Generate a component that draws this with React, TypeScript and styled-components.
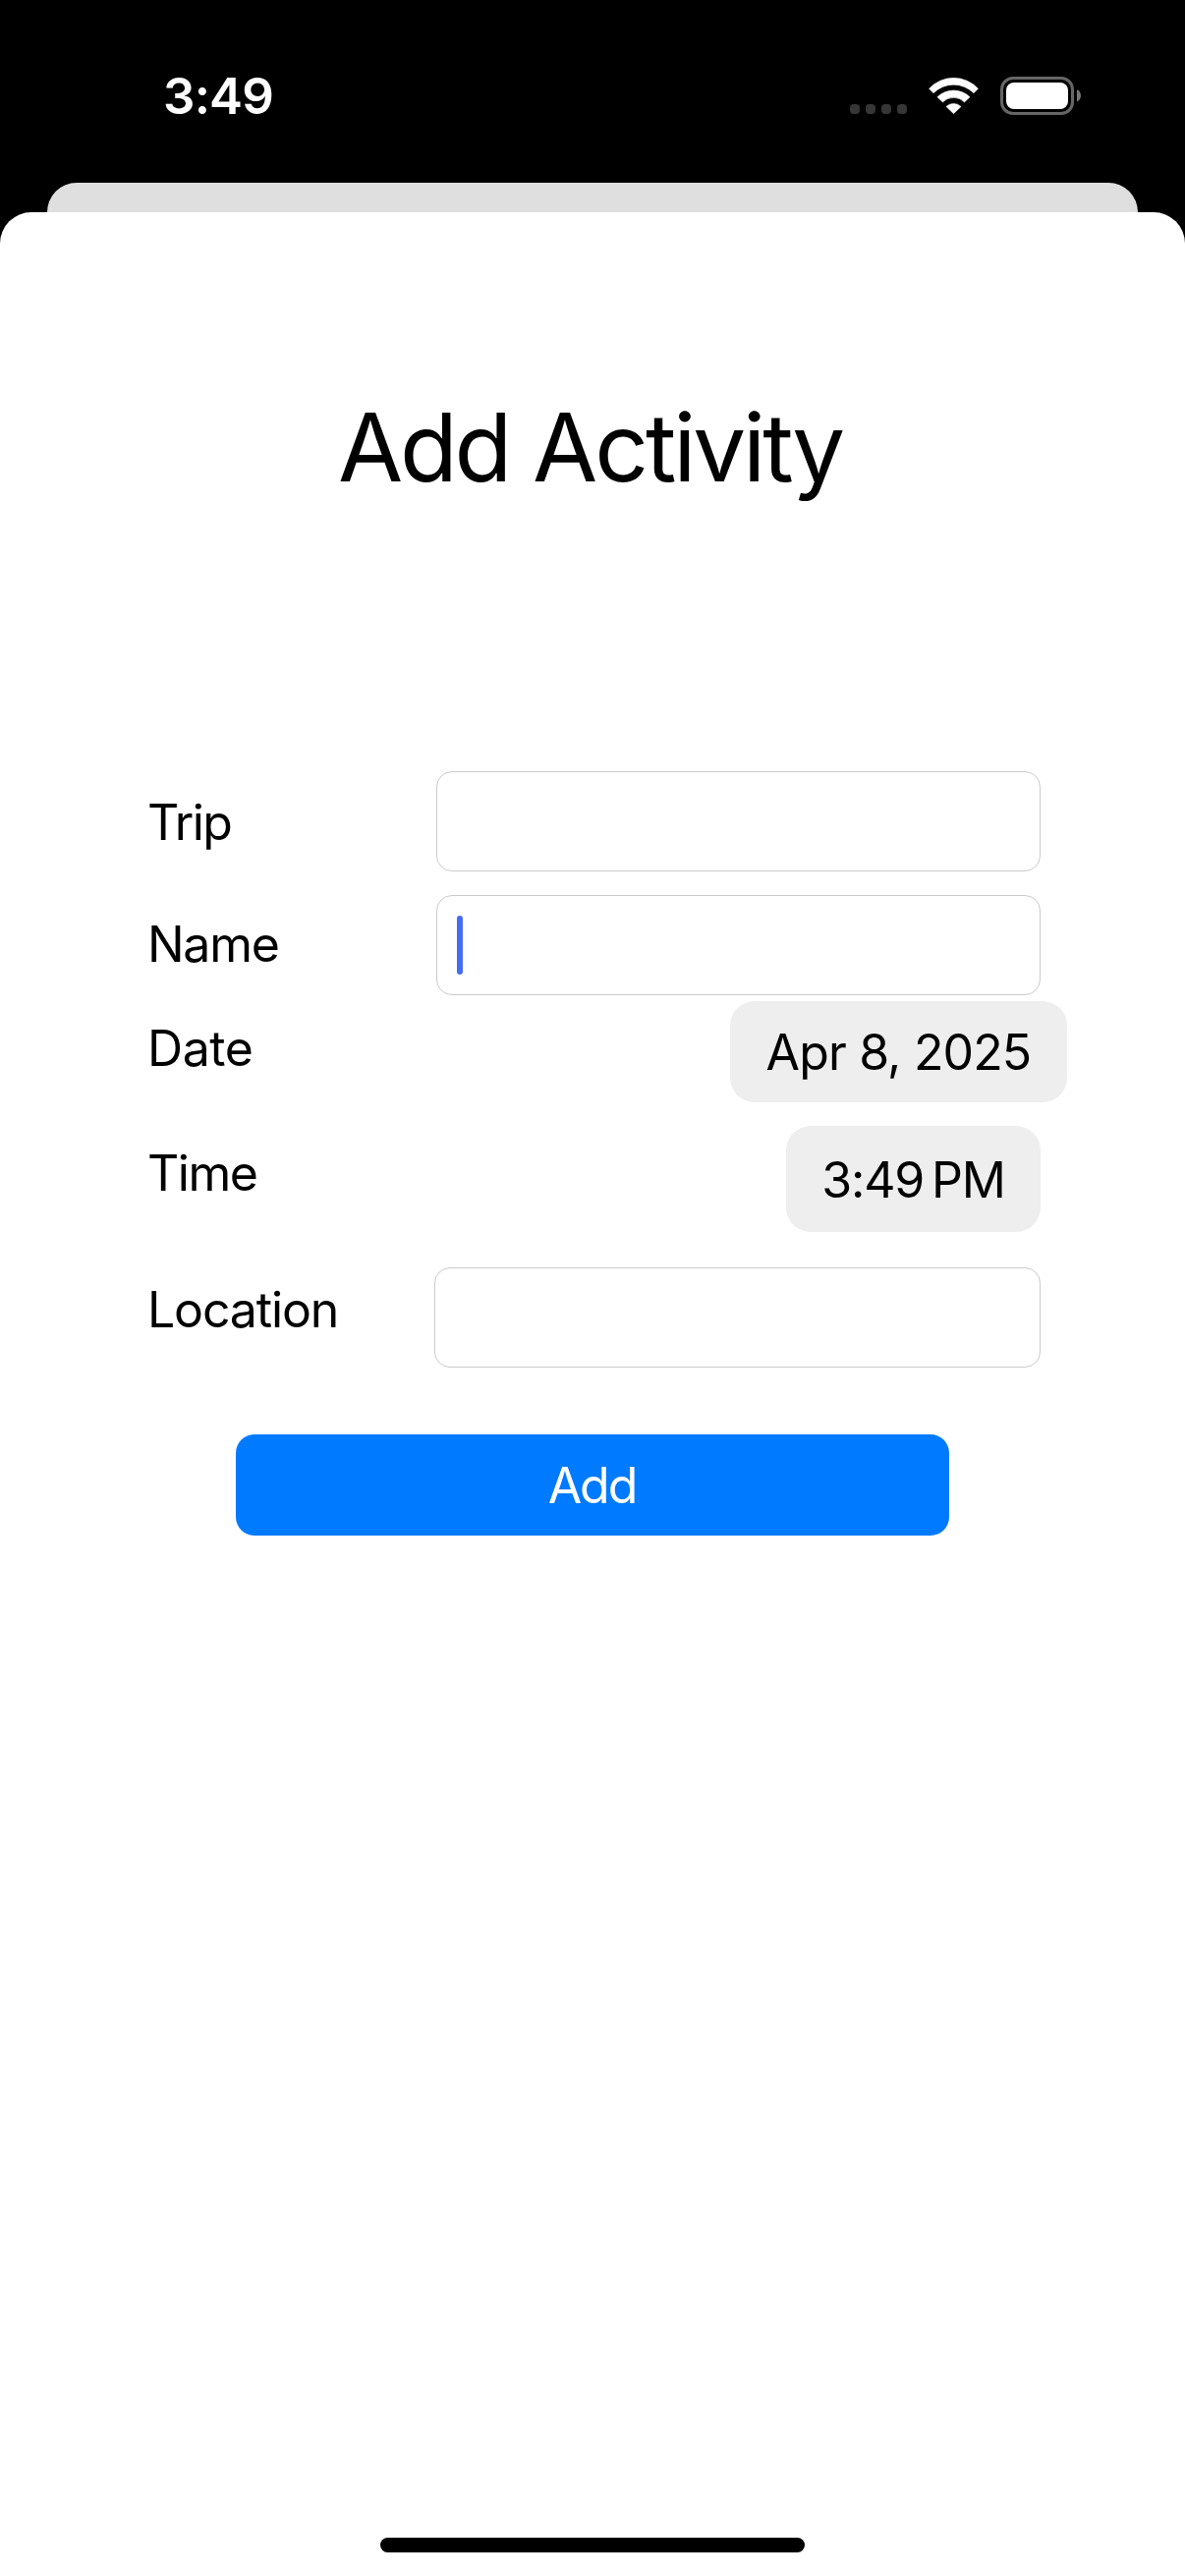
import React from 'react';
import styled, { createGlobalStyle } from 'styled-components';

const GlobalStyle = createGlobalStyle`
  *, *::before, *::after { box-sizing: border-box; }
  body { margin: 0; background: #000; font-family: Inter, "Liberation Sans", sans-serif; }
`;

const Screen = styled.div`
  width: 1206px;
  height: 2622px;
  display: flex;
  flex-direction: column;
  background: #000;
  overflow: hidden;
`;

const StatusBar = styled.header`
  height: 186px;
  padding: 0 106px 0 166px;
  display: flex;
  justify-content: space-between;
  align-items: flex-start;
  color: #fff;
`;

const Clock = styled.span`
  padding-top: 68px;
  font-size: 51px;
  line-height: 60px;
  font-weight: 570;
  letter-spacing: -0.8px;
`;

const StatusIcons = styled.div`
  display: flex;
  align-items: flex-end;
  height: 117px;
`;

const Signal = styled.div`
  display: flex;
  gap: 6px;
  margin: 0 22px 1px 0;
`;

const SignalDot = styled.span`
  width: 10px;
  height: 10px;
  border-radius: 4px;
  background: #363636;
`;

const WifiIcon = styled.svg`
  width: 51px;
  height: 38px;
  margin-right: 22px;
  fill: #fff;
  stroke: #fff;
  stroke-width: 0.6;
  stroke-linejoin: round;
`;

const BatteryIcon = styled.svg`
  width: 82px;
  height: 39px;
`;

const BackCard = styled.div`
  height: 30px;
  margin: 0 48px;
  border-radius: 31px 31px 0 0;
  background: #dfdfdf;
`;

const Sheet = styled.main`
  flex: 1;
  display: flex;
  flex-direction: column;
  align-items: stretch;
  border-radius: 32px 32px 0 0;
  background: #fff;
  color: #000;
`;

const Title = styled.h1`
  margin: 179px 0 0;
  padding-right: 5px;
  font-size: 96px;
  line-height: 120px;
  font-weight: 400;
  letter-spacing: -3.15px;
  text-align: center;
`;

const Form = styled.div`
  display: flex;
  flex-direction: column;
  margin-top: 270px;
  padding: 0 147px 0 150px;
`;

const Row = styled.div<{ $gap?: number }>`
  display: flex;
  justify-content: space-between;
  align-items: flex-start;
  margin-top: ${p => p.$gap ?? 0}px;
`;

const Label = styled.label<{ $drop: number; $spacing: number }>`
  padding-top: ${p => p.$drop}px;
  font-size: 50px;
  line-height: 60px;
  letter-spacing: ${p => p.$spacing}px;
`;

const Field = styled.div<{ $width?: number }>`
  width: ${p => p.$width ?? 615}px;
  height: 102px;
  padding-left: 20px;
  display: flex;
  align-items: center;
  border: 1px solid #cbcbcb;
  border-radius: 16px;
  background: #fff;
`;

const Caret = styled.span`
  width: 6px;
  height: 60px;
  border-radius: 3px;
  background: #456df2;
`;

const Pill = styled.button<{ $width: number; $height: number; $overhang?: number; $spacing: number }>`
  width: ${p => p.$width}px;
  height: ${p => p.$height}px;
  margin: 0 ${p => -(p.$overhang ?? 0)}px 0 0;
  padding: 1px 0 0;
  border: 0;
  border-radius: 25px;
  background: #eee;
  color: #000;
  font: 400 50px/60px Inter, "Liberation Sans", sans-serif;
  letter-spacing: ${p => p.$spacing}px;
  white-space: nowrap;
`;

const AddButton = styled.button`
  width: 726px;
  height: 103px;
  margin: 68px 0 0 240px;
  padding: 0 1px 0 0;
  border: 0;
  border-radius: 19px;
  background: #007aff;
  color: #fff;
  font: 400 50px/60px Inter, "Liberation Sans", sans-serif;
  letter-spacing: -2px;
`;

const HomeIndicator = styled.div`
  width: 432px;
  height: 15px;
  margin: auto auto 24px;
  border-radius: 8px;
  background: #000;
`;

export default function App() {
  return (
    <>
      <GlobalStyle />
      <Screen>
        <StatusBar>
          <Clock>3:49</Clock>
          <StatusIcons>
            <Signal>
              {[0, 1, 2, 3].map(i => <SignalDot key={i} />)}
            </Signal>
            <WifiIcon viewBox="0 0 51 38">
              <path d="M.6 11.2A34 34 0 0 1 50.4 11.2L46 15.7A29 29 0 0 0 5 15.7Z" />
              <path d="M9 19.8A23.5 23.5 0 0 1 42 19.8L36.5 24.9A15.5 15.5 0 0 0 14.5 24.9Z" />
              <path d="M18 29.4A11 11 0 0 1 33 29.4L25.5 36.7Z" />
            </WifiIcon>
            <BatteryIcon viewBox="0 0 82 39">
              <rect x="1.5" y="1.5" width="72" height="36" rx="11.5" fill="none" stroke="#666" strokeWidth="3" />
              <rect x="6" y="6" width="63" height="27" rx="8" fill="#fff" />
              <path d="M78 13.2C80.6 14.2 82 16.6 82 19.3S80.6 24.6 78 25.6Z" fill="#777" />
            </BatteryIcon>
          </StatusIcons>
        </StatusBar>
        <BackCard />
        <Sheet>
          <Title>Add Activity</Title>
          <Form>
            <Row>
              <Label $drop={22} $spacing={-1.6}>Trip</Label>
              <Field />
            </Row>
            <Row $gap={24}>
              <Label $drop={20} $spacing={-1.3}>Name</Label>
              <Field><Caret /></Field>
            </Row>
            <Row $gap={6}>
              <Label $drop={18} $spacing={-0.4}>Date</Label>
              <Pill $width={343} $height={103} $overhang={27} $spacing={-0.85}>Apr 8, 2025</Pill>
            </Row>
            <Row $gap={24}>
              <Label $drop={18} $spacing={-1.5}>Time</Label>
              <Pill $width={259} $height={108} $spacing={-1.2}>3:49{'\u202f'}PM</Pill>
            </Row>
            <Row $gap={36}>
              <Label $drop={13} $spacing={-1.15}>Location</Label>
              <Field $width={617} />
            </Row>
          </Form>
          <AddButton>Add</AddButton>
          <HomeIndicator />
        </Sheet>
      </Screen>
    </>
  );
}
